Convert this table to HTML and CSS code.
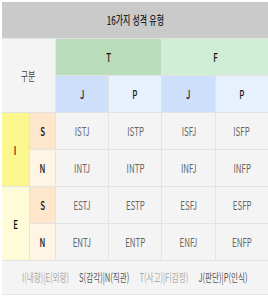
FILE: index.html
```html
<!DOCTYPE html>
<html lang="ko">
<head>
<meta charset="utf-8">
<link rel="stylesheet" href="styles.css">
</head>
<body>
<div class="wrap">
<table class="mbti">
  <colgroup>
    <col class="c-ie"><col class="c-sn"><col class="c-d"><col class="c-d"><col class="c-d"><col class="c-d">
  </colgroup>
  <tr class="r-title"><th colspan="6" class="title"><span class="tx">16가지 성격 유형</span></th></tr>
  <tr class="r-h"><th colspan="2" rowspan="2" class="gubun"><span class="tx">구분</span></th><th colspan="2" class="t"><span class="tx">T</span></th><th colspan="2" class="f"><span class="tx">F</span></th></tr>
  <tr class="r-h"><th class="j"><span class="tx">J</span></th><th class="p"><span class="tx">P</span></th><th class="j"><span class="tx">J</span></th><th class="p"><span class="tx">P</span></th></tr>
  <tr class="r-d"><th rowspan="2" class="i"><span class="tx">I</span></th><th class="s"><span class="tx">S</span></th><td><span class="tx">ISTJ</span></td><td><span class="tx">ISTP</span></td><td><span class="tx">ISFJ</span></td><td><span class="tx">ISFP</span></td></tr>
  <tr class="r-d"><th class="n"><span class="tx">N</span></th><td><span class="tx">INTJ</span></td><td><span class="tx">INTP</span></td><td><span class="tx">INFJ</span></td><td><span class="tx">INFP</span></td></tr>
  <tr class="r-d"><th rowspan="2" class="e"><span class="tx">E</span></th><th class="s"><span class="tx">S</span></th><td><span class="tx">ESTJ</span></td><td><span class="tx">ESTP</span></td><td><span class="tx">ESFJ</span></td><td><span class="tx">ESFP</span></td></tr>
  <tr class="r-d"><th class="n"><span class="tx">N</span></th><td><span class="tx">ENTJ</span></td><td><span class="tx">ENTP</span></td><td><span class="tx">ENFJ</span></td><td><span class="tx">ENFP</span></td></tr>
  <tr class="r-foot"><td colspan="6" class="foot"><div class="fwrap"><span class="tx ftx"><span class="lt">I(내향)|E(외향)</span> <span class="dk">S(감각)|N(직관)</span> <span class="lt">T(사고)|F(감정)</span> <span class="dk">J(판단)|P(인식)</span></span></div></td></tr>
</table>
</div>
</body>
</html>
```
FILE: styles.css
```css
html, body { margin: 0; padding: 0; background: #fff; }
.wrap { padding: 2px 0 0 2px; }
.mbti {
  border-collapse: collapse;
  table-layout: fixed;
  width: 267px;
  font-family: "Noto Sans CJK KR", "Noto Sans", sans-serif;
  font-size: 12px;
  color: #555;
}
.c-ie { width: 27px; }
.c-sn { width: 26px; }
.c-d { width: 53px; }
.mbti th, .mbti td {
  border: 1px solid #e3e3e3;
  padding: 0;
  text-align: center;
  vertical-align: middle;
  font-weight: normal;
  white-space: nowrap;
  overflow: hidden;
}
.mbti tr:first-child th { border-top: none; }
.mbti th:first-child, .mbti td:first-child { border-left: none; }
.tx {
  display: inline-block;
  transform: scaleX(0.66);
  line-height: 14px;
}
.r-title { height: 36px; }
.r-h { height: 37px; }
.r-d { height: 37px; }
.r-foot { height: 34px; }
.mbti th.title { background: #cacaca; color: #222; font-weight: 500; }
.gubun { background: #f4f4f4; color: #444; }
.mbti th.t { background: #b9dcbb; color: #111; font-weight: 500; }
.mbti th.f { background: #cfeed3; color: #111; font-weight: 500; }
.mbti th.j { background: #cddffb; color: #222; font-weight: 500; }
.mbti th.p { background: #e7f0fd; color: #222; font-weight: 500; }
.mbti th.i { background: #fcf68e; color: #111; font-weight: 500; }
.mbti th.e { background: #fefcd8; color: #111; font-weight: 500; }
.mbti th.s { background: #fde6cb; color: #111; font-weight: 500; }
.mbti th.n { background: #fef5e5; color: #111; font-weight: 500; }
.mbti td { background: #f4f4f4; color: #666; }
.mbti td.foot { background: #f4f4f4; border-right: none; }
.fwrap { display: flex; justify-content: center; }
.ftx { font-size: 11.5px; word-spacing: 12px; }
.lt { color: #aaa; word-spacing: 0; }
.dk { color: #555; word-spacing: 0; }
```
